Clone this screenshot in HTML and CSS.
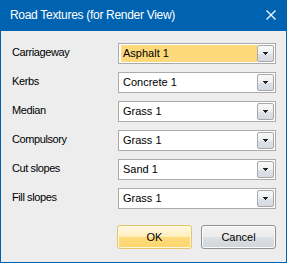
FILE: index.html
```html
<!DOCTYPE html>
<html lang="en">

<head>
    <meta charset="UTF-8">
    <title>Road Textures (for Render View)</title>
    <link rel="stylesheet" href="styles.css">
</head>

<body>
    <div class="window">
        <div class="titlebar">
            <span class="title">Road Textures (for Render View)</span>
            <svg class="close" width="10" height="10" viewBox="0 0 10 10">
                <path d="M0.5 0.5 L9.5 9.5 M9.5 0.5 L0.5 9.5" stroke="#fff" stroke-width="1.2" fill="none"/>
            </svg>
        </div>

        <div class="content">
            <div class="form">
                <label>Carriageway</label>
                <div class="combo">
                    <span class="value selected">Asphalt 1</span>
                    <span class="drop"><svg width="5" height="3" viewBox="0 0 5 3"><polygon points="0,0 5,0 2.5,3" fill="#222"/></svg></span>
                </div>

                <label>Kerbs</label>
                <div class="combo">
                    <span class="value">Concrete 1</span>
                    <span class="drop"><svg width="5" height="3" viewBox="0 0 5 3"><polygon points="0,0 5,0 2.5,3" fill="#222"/></svg></span>
                </div>

                <label>Median</label>
                <div class="combo">
                    <span class="value">Grass 1</span>
                    <span class="drop"><svg width="5" height="3" viewBox="0 0 5 3"><polygon points="0,0 5,0 2.5,3" fill="#222"/></svg></span>
                </div>

                <label>Compulsory</label>
                <div class="combo">
                    <span class="value">Grass 1</span>
                    <span class="drop"><svg width="5" height="3" viewBox="0 0 5 3"><polygon points="0,0 5,0 2.5,3" fill="#222"/></svg></span>
                </div>

                <label>Cut slopes</label>
                <div class="combo">
                    <span class="value">Sand 1</span>
                    <span class="drop"><svg width="5" height="3" viewBox="0 0 5 3"><polygon points="0,0 5,0 2.5,3" fill="#222"/></svg></span>
                </div>

                <label>Fill slopes</label>
                <div class="combo">
                    <span class="value">Grass 1</span>
                    <span class="drop"><svg width="5" height="3" viewBox="0 0 5 3"><polygon points="0,0 5,0 2.5,3" fill="#222"/></svg></span>
                </div>
            </div>

            <div class="buttons">
                <button class="btn default">OK</button>
                <button class="btn">Cancel</button>
            </div>
        </div>
    </div>
</body>

</html>
```

FILE: styles.css
```css
body {
    margin: 0;
    padding: 0;
    font-family: "Liberation Sans", Arial, sans-serif;
    font-size: 11px;
    color: #000;
}

.window {
    width: 287px;
    height: 263px;
    box-sizing: border-box;
    border: 1px solid #0063b1;
    border-top: none;
    background-color: #ededed;
    display: flex;
    flex-direction: column;
}

.titlebar {
    height: 31px;
    margin: 0 -1px;
    background-color: #0063b1;
    display: flex;
    align-items: center;
    justify-content: space-between;
    padding: 0 11px 1px 10px;
    box-sizing: border-box;
}

.title {
    color: #fff;
    font-size: 12px;
    letter-spacing: -0.3px;
}

.content {
    padding: 12px 10px 0 11px;
}

.form {
    display: grid;
    grid-template-columns: 106px 158px;
    grid-auto-rows: 21px;
    row-gap: 8px;
}

.form label {
    letter-spacing: -0.4px;
    padding-top: 3px;
}

.combo {
    display: flex;
    border: 1px solid #ababab;
    background-color: #fff;
    padding: 1px;
    box-sizing: border-box;
}

.value {
    flex: 1;
    padding-left: 2px;
    line-height: 17px;
    margin-left: 1px;
}

.value.selected {
    background-color: #fdd97b;
}

.drop {
    width: 17px;
    height: 17px;
    box-sizing: border-box;
    border: 1px solid #a8a8a8;
    border-radius: 2px;
    background: linear-gradient(#f8f8f8, #eef0f2 50%, #dde2e8 51%, #d6dbe2);
    display: flex;
    align-items: center;
    justify-content: center;
}

.drop svg {
    display: block;
    shape-rendering: crispEdges;
}

.buttons {
    display: flex;
    justify-content: flex-end;
    gap: 9px;
    margin-top: 16px;
}

.btn {
    width: 75px;
    height: 24px;
    font-family: "Liberation Sans", Arial, sans-serif;
    font-size: 11px;
    color: #000;
    border: 1px solid #8f9193;
    border-radius: 3px;
    background: linear-gradient(#f3f3f3, #ebebeb 50%, #dde1e6 51%, #d0d5da);
    box-shadow: inset 0 0 0 1px #fbfbfb;
    padding: 0;
}

.btn.default {
    border-color: #e2c56c;
    background: linear-gradient(#fef8e5, #fdeeb8 50%, #fddb7c 51%, #fdd56a);
    box-shadow: inset 0 0 0 1px #fff8e0;
}
```
